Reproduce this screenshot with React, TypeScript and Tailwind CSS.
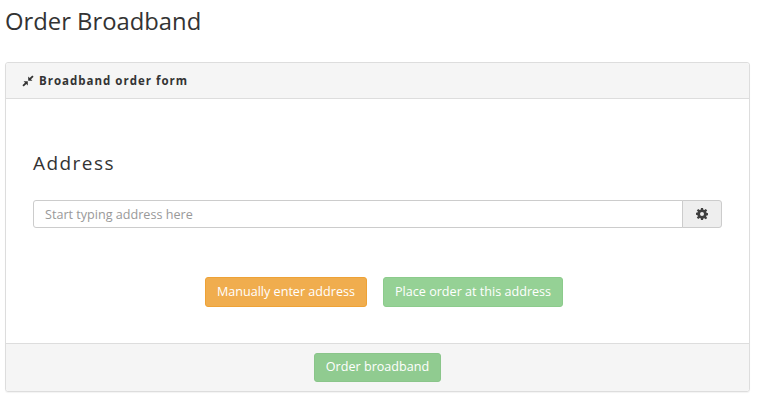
import React from 'react';

function CompressIcon() {
  return (
    <svg width="12" height="12" viewBox="0 0 12 12" className="shrink-0" fill="#333">
      <path d="M6.200 5.800V1.600l1.500 1.400L10.300.400l1.300 1.300L9 4.300l1.400 1.500z" />
      <path d="M5.800 6.200v4.200L4.300 9l-2.600 2.600L.400 10.300 3 7.700 1.600 6.200z" />
    </svg>
  );
}

function CogIcon() {
  return (
    <svg width="12" height="12" viewBox="0 0 24 24" fill="#3f3f3f">
      <path
        fillRule="evenodd"
        d="M10 0h4l.7 3.400 2 .8L19.600 2l2.800 2.800-2.200 2.900.8 2 3 .6v4l-3 .7-.8 2 2.200 2.800-2.800 2.800-2.900-2.200-2 .8L14 24h-4l-.7-3.400-2-.8L4.400 22l-2.800-2.800 2.200-2.900-.8-2-3-.6v-4l3-.6.8-2L1.600 4.800 4.400 2l2.900 2.200 2-.8zM12 8a4 4 0 1 0 0 8 4 4 0 0 0 0-8z"
      />
    </svg>
  );
}

export default function App() {
  return (
    <div className="w-[765px] h-[410px] bg-white overflow-hidden px-[5px] font-['Open_Sans',sans-serif] text-[#333]">
      <h1 className="h-[62px] pt-[5px] text-[23.8px] leading-[33px] font-normal text-[#333]">Order Broadband</h1>

      <div className="w-[745px] h-[330px] flex flex-col border border-[#dddddd] rounded-[3px] shadow-[0_1px_1px_rgba(0,0,0,0.05)]">
        <div className="h-[36px] flex items-center gap-[5px] pl-[16px] pt-px bg-[#f5f5f5] border-b border-[#dddddd] rounded-t-[3px]">
          <CompressIcon />
          <span className="text-[11.5px] font-bold tracking-[1px] text-[#333]">Broadband order form</span>
        </div>

        <div className="flex-1 flex flex-col px-[27px]">
          <h2 className="mt-[50px] h-[28px] text-[19px] leading-[28px] font-normal tracking-[1.45px] text-[#333]">Address</h2>

          <div className="mt-[23px] flex h-[28px]">
            <input
              placeholder="Start typing address here"
              className="flex-1 min-w-0 px-[11px] pt-[2px] text-[12.6px] border border-[#cccccc] rounded-l-[3px] outline-none placeholder:text-[#999] bg-white"
            />
            <button className="w-[40px] -ml-px flex items-center justify-center bg-[#eeeeee] border border-[#cccccc] rounded-r-[3px]">
              <CogIcon />
            </button>
          </div>

          <div className="mt-[49px] flex justify-center gap-[16px] pl-[13px]">
            <button className="h-[30px] px-[11px] text-[12.6px] text-white bg-[#f0ad4e] border border-[#eea236] rounded-[3px]">
              Manually enter address
            </button>
            <button className="h-[30px] px-[11px] text-[12.6px] text-white bg-[#95d195] border border-[#8ccb8c] rounded-[3px]">
              Place order at this address
            </button>
          </div>
        </div>

        <div className="h-[48px] flex items-center justify-center bg-[#f5f5f5] border-t border-[#dddddd] rounded-b-[3px]">
          <button className="h-[29px] px-[11px] text-[12.6px] text-white bg-[#90cb90] border border-[#8ac58a] rounded-[3px]">
            Order broadband
          </button>
        </div>
      </div>
    </div>
  );
}
